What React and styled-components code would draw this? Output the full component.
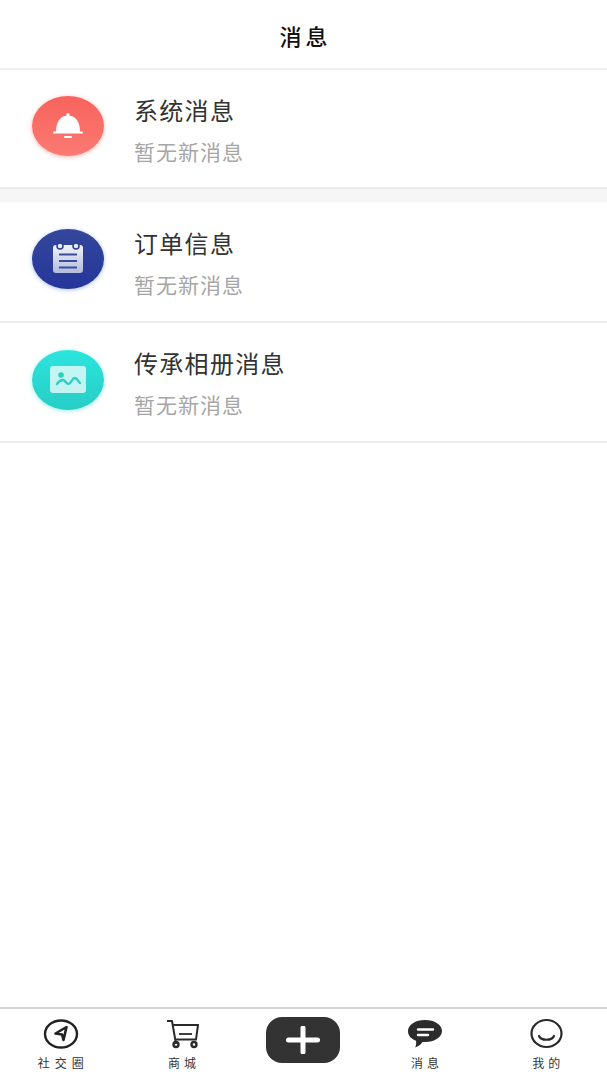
import styled, { createGlobalStyle } from "styled-components";

const cjk = `"Noto Sans CJK SC", "Noto Sans", sans-serif`;

const GlobalStyle = createGlobalStyle`
  html, body {
    margin: 0;
    padding: 0;
    background: #fff;
    font-family: ${cjk};
  }
  * {
    box-sizing: border-box;
  }
`;

const Page = styled.div`
  width: 607px;
  height: 1080px;
  display: flex;
  flex-direction: column;
  overflow: hidden;
  background: #fff;
`;

const Header = styled.header`
  height: 70px;
  flex: none;
  display: flex;
  align-items: center;
  justify-content: center;
  border-bottom: 2px solid #efefef;
  padding-top: 2px;
`;

const Title = styled.h1`
  margin: 0 -4px 0 0;
  font-size: 22px;
  font-weight: 500;
  letter-spacing: 4px;
  line-height: 1;
  color: #111;
`;

const Content = styled.main`
  flex: 1;
  display: flex;
  flex-direction: column;
`;

const Row = styled.div`
  height: ${(p) => p.$height}px;
  flex: none;
  display: flex;
  align-items: center;
  gap: 30px;
  padding: 0 0 ${(p) => p.$shift}px 32px;
  border-bottom: 2px solid #ececec;
`;

const Spacer = styled.div`
  height: 13px;
  flex: none;
  background: #f6f6f6;
`;

const Badge = styled.div`
  width: 72px;
  height: 60px;
  flex: none;
  border-radius: 50%;
  display: flex;
  align-items: center;
  justify-content: center;
  background: ${(p) => p.$bg};
  box-shadow: 0 1px 4px ${(p) => p.$glow};
`;

const Texts = styled.div`
  display: flex;
  flex-direction: column;
  gap: 11px;
  margin-top: 8px;
`;

const Name = styled.div`
  font-size: 24px;
  letter-spacing: 1.3px;
  line-height: 30px;
  color: #333;
`;

const Hint = styled.div`
  font-size: 21px;
  letter-spacing: 1px;
  line-height: 30px;
  color: #a6a6a6;
`;

const TabBar = styled.nav`
  height: 73px;
  flex: none;
  display: grid;
  grid-template-columns: repeat(5, 1fr);
  border-top: 2px solid #d6d6d6;
`;

const Tab = styled.div`
  display: flex;
  flex-direction: column;
  align-items: center;
  padding-top: ${(p) => (p.$add ? 8 : 9)}px;
`;

const TabIcon = styled.div`
  height: 32px;
  display: flex;
  align-items: center;
  justify-content: center;
`;

const TabLabel = styled.span`
  margin-top: 6px;
  font-size: 12px;
  line-height: 14px;
  letter-spacing: ${(p) => p.$spacing}px;
  margin-right: -${(p) => p.$spacing}px;
  color: #333;
`;

const AddButton = styled.div`
  width: 74px;
  height: 46px;
  border-radius: 16px;
  background: #333;
  display: flex;
  align-items: center;
  justify-content: center;
`;

const BellIcon = () => (
  <svg width="30" height="30" viewBox="0 0 30 30">
    <circle cx="15" cy="3.5" r="1.6" fill="#fff" />
    <path d="M3 21C3 10 8 4.500 15 4.500S27 10 27 21z" fill="#fff" />
    <rect x="0" y="20.500" width="30" height="2" rx="1" fill="#fff" />
    <rect x="11" y="25" width="8" height="2" rx="1" fill="#fff" />
  </svg>
);

const NoteIcon = () => (
  <svg width="32" height="32" viewBox="0 1 32 32">
    <defs>
      <linearGradient id="note" x1="0" y1="0" x2="0" y2="1">
        <stop offset="0" stopColor="#f1f3f9" />
        <stop offset="1" stopColor="#b3bbdb" />
      </linearGradient>
    </defs>
    <rect x="1" y="3" width="30" height="28" rx="3" fill="url(#note)" />
    <circle cx="8" cy="4" r="3" fill="#e8ebf5" stroke="#2b3d94" strokeWidth="1.500" />
    <circle cx="24" cy="4" r="3" fill="#e8ebf5" stroke="#2b3d94" strokeWidth="1.500" />
    <path d="M7 12.500h18M7 19h18M7 25.500h18" stroke="#3b4c9e" strokeWidth="1.800" />
  </svg>
);

const PictureIcon = () => (
  <svg width="36" height="27" viewBox="0 0 36 27">
    <rect width="36" height="27" rx="3" fill="#fff" fillOpacity="0.72" />
    <circle cx="11" cy="9" r="2.800" fill="#2ccfc6" />
    <path
      d="M7 18c2-3 4-4 6-4s3 4 5.500 4S22 12 24.500 12s3.500 3 5.500 5"
      fill="none"
      stroke="#2ccfc6"
      strokeWidth="2.400"
      strokeLinecap="round"
    />
  </svg>
);

const SendIcon = () => (
  <svg width="36" height="32" viewBox="0 0 36 32">
    <ellipse cx="18" cy="16" rx="16" ry="13.500" fill="none" stroke="#222" strokeWidth="2.400" />
    <path d="M23.500 9L12.500 15.500 19 16.500 20.500 22z" fill="none" stroke="#222" strokeWidth="2.600" strokeLinejoin="round" />
  </svg>
);

const CartIcon = () => (
  <svg width="34" height="32" viewBox="0 0 34 32">
    <path d="M2 3h5l4 23" fill="none" stroke="#2a2a2a" strokeWidth="2" strokeLinejoin="round" />
    <path d="M7.500 7H33l-2 14.500H10" fill="none" stroke="#2a2a2a" strokeWidth="2" />
    <path d="M14 16h13" stroke="#2a2a2a" strokeWidth="1.800" />
    <circle cx="11" cy="26.500" r="2.500" fill="none" stroke="#2a2a2a" strokeWidth="2.400" />
    <circle cx="29" cy="26.500" r="2.500" fill="none" stroke="#2a2a2a" strokeWidth="2.400" />
  </svg>
);

const PlusIcon = () => (
  <svg width="34" height="28" viewBox="0 0 34 28">
    <path d="M17 2v24M2.500 14h29" stroke="#fff" strokeWidth="5" strokeLinecap="round" />
  </svg>
);

const ChatIcon = () => (
  <svg width="36" height="32" viewBox="0 0 36 32">
    <path d="M18 2c9.500 0 17 4.900 17 11s-7.500 11-17 11c-1 0-1.500 0-2.500-.1-1.500 2.500-4 4.500-7.500 5.600 1-1.500 1.500-4 1-6.800C4 21 1 17.500 1 13 1 6.900 8.500 2 18 2z" fill="#2b2b2b" />
    <path d="M11 11.500h15M11 17h10" stroke="#fff" strokeWidth="2.400" strokeLinecap="round" />
  </svg>
);

const SmileIcon = () => (
  <svg width="36" height="32" viewBox="0 0 36 32">
    <ellipse cx="18.500" cy="15.500" rx="15" ry="13.500" fill="none" stroke="#2a2a2a" strokeWidth="2.200" />
    <path d="M11 18c2 5 13 5 15 0" fill="none" stroke="#2a2a2a" strokeWidth="2.200" strokeLinecap="round" />
  </svg>
);

const messages = [
  {
    name: "系统消息",
    bg: "linear-gradient(180deg, #f8635d, #fb7a72)",
    glow: "rgba(250, 110, 100, 0.5)",
    icon: <BellIcon />,
    height: 119,
    shift: 5,
  },
  {
    name: "订单信息",
    bg: "linear-gradient(180deg, #34479c, #25369a)",
    glow: "rgba(90, 130, 240, 0.5)",
    icon: <NoteIcon />,
    height: 121,
    shift: 5,
  },
  {
    name: "传承相册消息",
    bg: "linear-gradient(180deg, #2be5dd, #27cdc5)",
    glow: "rgba(60, 225, 215, 0.5)",
    icon: <PictureIcon />,
    height: 120,
    shift: 5,
  },
];

const tabs = [
  { label: "社交圈", icon: <SendIcon />, spacing: 5 },
  { label: "商城", icon: <CartIcon />, spacing: 4 },
  { add: true },
  { label: "消息", icon: <ChatIcon />, spacing: 4 },
  { label: "我的", icon: <SmileIcon />, spacing: 4 },
];

const App = () => {
  return (
    <Page>
      <GlobalStyle />
      <Header>
        <Title>消息</Title>
      </Header>
      <Content>
        {messages.map((m, i) => (
          <div key={m.name}>
            <Row $height={m.height} $shift={m.shift}>
              <Badge $bg={m.bg} $glow={m.glow}>
                {m.icon}
              </Badge>
              <Texts>
                <Name>{m.name}</Name>
                <Hint>暂无新消息</Hint>
              </Texts>
            </Row>
            {i === 0 && <Spacer />}
          </div>
        ))}
      </Content>
      <TabBar>
        {tabs.map((t, i) =>
          t.add ? (
            <Tab key={i} $add>
              <AddButton>
                <PlusIcon />
              </AddButton>
            </Tab>
          ) : (
            <Tab key={i}>
              <TabIcon>{t.icon}</TabIcon>
              <TabLabel $spacing={t.spacing}>{t.label}</TabLabel>
            </Tab>
          )
        )}
      </TabBar>
    </Page>
  );
};

export default App;
